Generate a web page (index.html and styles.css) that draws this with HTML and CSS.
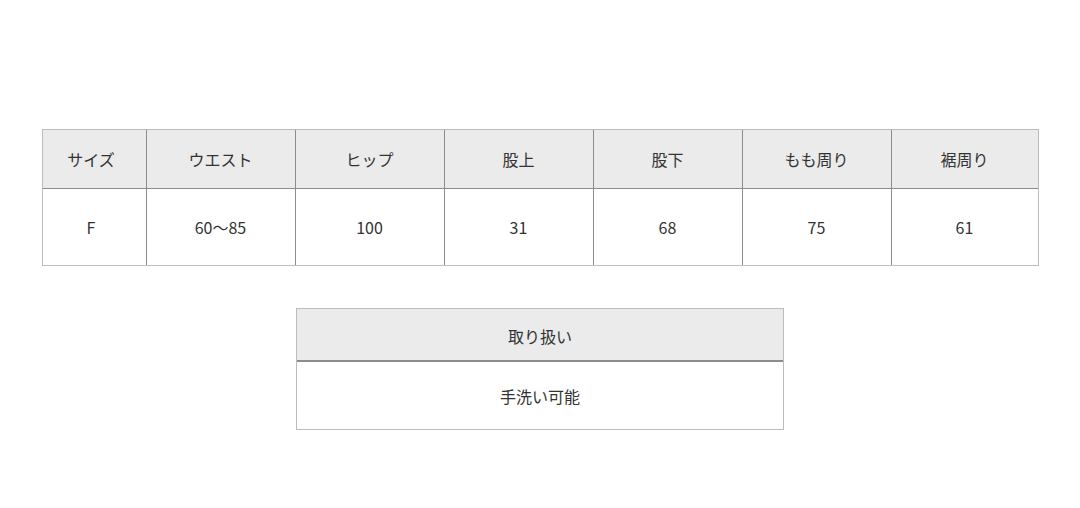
FILE: index.html
```html
<!DOCTYPE html>
<html lang="ja">
<head>
<meta charset="utf-8">
<link rel="stylesheet" href="styles.css">
</head>
<body>
<main class="page">
  <table class="spec size">
    <thead>
      <tr>
        <th class="c1">サイズ</th>
        <th class="c2">ウエスト</th>
        <th class="c2">ヒップ</th>
        <th class="c2">股上</th>
        <th class="c2">股下</th>
        <th class="c2">もも周り</th>
        <th class="c7">裾周り</th>
      </tr>
    </thead>
    <tbody>
      <tr>
        <td class="first">F</td>
        <td>60〜85</td>
        <td>100</td>
        <td>31</td>
        <td>68</td>
        <td>75</td>
        <td>61</td>
      </tr>
    </tbody>
  </table>
  <table class="spec care">
    <thead>
      <tr><th>取り扱い</th></tr>
    </thead>
    <tbody>
      <tr><td>手洗い可能</td></tr>
    </tbody>
  </table>
</main>
</body>
</html>
```
FILE: styles.css
```css
html, body {
  margin: 0;
  padding: 0;
  background: #fff;
}
.page {
  display: flex;
  flex-direction: column;
  align-items: center;
  padding-top: 129px;
  gap: 42px;
  font-family: "Noto Sans CJK JP", "Noto Sans", sans-serif;
  font-size: 16px;
  color: #333;
}
.spec {
  border-collapse: separate;
  border-spacing: 0;
  border: 1px solid #bcbcbc;
  table-layout: fixed;
}
.spec th, .spec td {
  padding: 0;
  text-align: center;
  vertical-align: middle;
  font-weight: 400;
}
.spec th {
  background: #ebebeb;
}
.size {
  width: 997px;
}
.size th {
  height: 58px;
  border-bottom: 1px solid #8c8c8c;
}
.size td {
  height: 76px;
}
.size th + th, .size td + td {
  border-left: 1px solid #8c8c8c;
}
.size .c1, .size .first {
  padding-right: 6px;
}
.size .c1 { width: 97px; }
.size .c2 { width: 148px; }
.size .c7 { width: auto; }
.care {
  width: 488px;
}
.care th {
  height: 48px;
  padding-top: 3px;
  border-bottom: 2px solid #8c8c8c;
}
.care td {
  height: 67px;
}
```
